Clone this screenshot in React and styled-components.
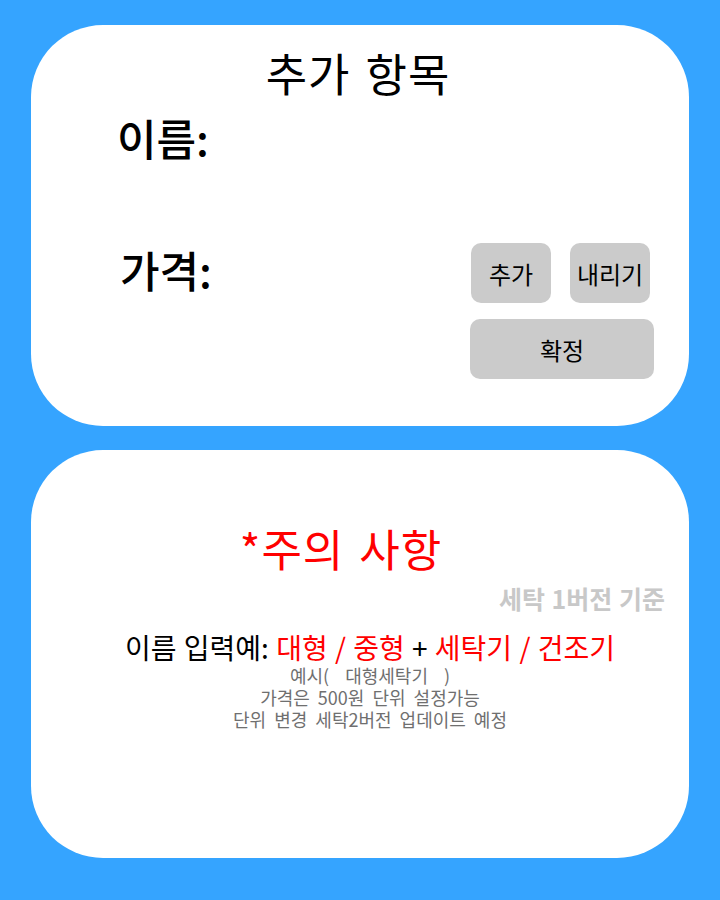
import React from "react";
import styled, { createGlobalStyle } from "styled-components";

const GlobalStyle = createGlobalStyle`
  html, body {
    margin: 0;
    padding: 0;
    background: #35a4ff;
  }
  body {
    font-family: "Noto Sans CJK KR", "Noto Sans", sans-serif;
  }
`;

const Page = styled.div`
  min-height: 900px;
  box-sizing: border-box;
  padding: 25px 31px 42px;
  display: flex;
  flex-direction: column;
  gap: 24px;
  background: #35a4ff;
`;

const Card = styled.section`
  height: ${({ $height }) => $height}px;
  box-sizing: border-box;
  background: #fff;
  border-radius: 72px;
  display: flex;
  flex-direction: column;
`;

const FormCard = styled(Card)`
  padding: 22px 35px 0 86px;
`;

const Title = styled.h1`
  margin: 0 0 0 -55px;
  font-size: 45px;
  font-weight: 400;
  line-height: 52px;
  letter-spacing: 1px;
  word-spacing: 4px;
  text-align: center;
  color: #000;
`;

const FieldLabel = styled.div`
  font-size: 43px;
  font-weight: 500;
  line-height: 50px;
  color: #000;
  margin-top: ${({ $top }) => $top || 0}px;
  margin-left: ${({ $indent }) => $indent || 0}px;
`;

const PriceRow = styled.div`
  display: flex;
  justify-content: space-between;
  align-items: flex-start;
  margin-top: 81px;
`;

const ButtonGroup = styled.div`
  display: flex;
  flex-direction: column;
  gap: 16px;
  width: 184px;
`;

const ButtonRow = styled.div`
  display: flex;
  gap: 19px;
  padding-left: 1px;
`;

const Button = styled.button`
  width: ${({ $wide }) => ($wide ? "184px" : "80px")};
  height: 60px;
  border: none;
  border-radius: 10px;
  background: #cbcbcb;
  color: #000;
  font-family: inherit;
  font-size: 24px;
  padding: 0;
  cursor: pointer;
`;

const NoticeCard = styled(Card)`
  padding: 72px 24px 0 44px;
`;

const NoticeTitle = styled.h2`
  margin: 0 0 0 -58px;
  font-size: 44px;
  font-weight: 400;
  line-height: 52px;
  letter-spacing: 1px;
  word-spacing: 4px;
  color: #ff0000;
  text-align: center;
`;

const Version = styled.div`
  margin-top: 9px;
  text-align: right;
  font-size: 25px;
  font-weight: 700;
  line-height: 30px;
  word-spacing: 1px;
  color: #c8c8c8;
`;

const Example = styled.div`
  margin-top: 17px;
  text-align: center;
  font-size: 28px;
  line-height: 34px;
  word-spacing: 1px;
  color: #000;
`;

const Red = styled.span`
  color: #ff0000;
`;

const Notes = styled.div`
  display: flex;
  flex-direction: column;
  align-items: center;
`;

const Note = styled.div`
  font-size: 18px;
  line-height: 22px;
  word-spacing: 4px;
  color: #6f6f6f;
  white-space: pre;
`;

export default function App() {
  return (
    <>
      <GlobalStyle />
      <Page>
        <FormCard $height={401}>
          <Title>추가 항목</Title>
          <FieldLabel $top={13}>이름:</FieldLabel>
          <PriceRow>
            <FieldLabel $top={1} $indent={3}>가격:</FieldLabel>
            <ButtonGroup>
              <ButtonRow>
                <Button>추가</Button>
                <Button>내리기</Button>
              </ButtonRow>
              <Button $wide>확정</Button>
            </ButtonGroup>
          </PriceRow>
        </FormCard>

        <NoticeCard $height={408}>
          <NoticeTitle>*주의 사항</NoticeTitle>
          <Version>세탁 1버전 기준</Version>
          <Example>
            이름 입력예: <Red>대형 / 중형</Red> + <Red>세탁기 / 건조기</Red>
          </Example>
          <Notes>
            <Note>{"예시(  대형세탁기  )"}</Note>
            <Note>가격은 500원 단위 설정가능</Note>
            <Note>단위 변경 세탁2버전 업데이트 예정</Note>
          </Notes>
        </NoticeCard>
      </Page>
    </>
  );
}
